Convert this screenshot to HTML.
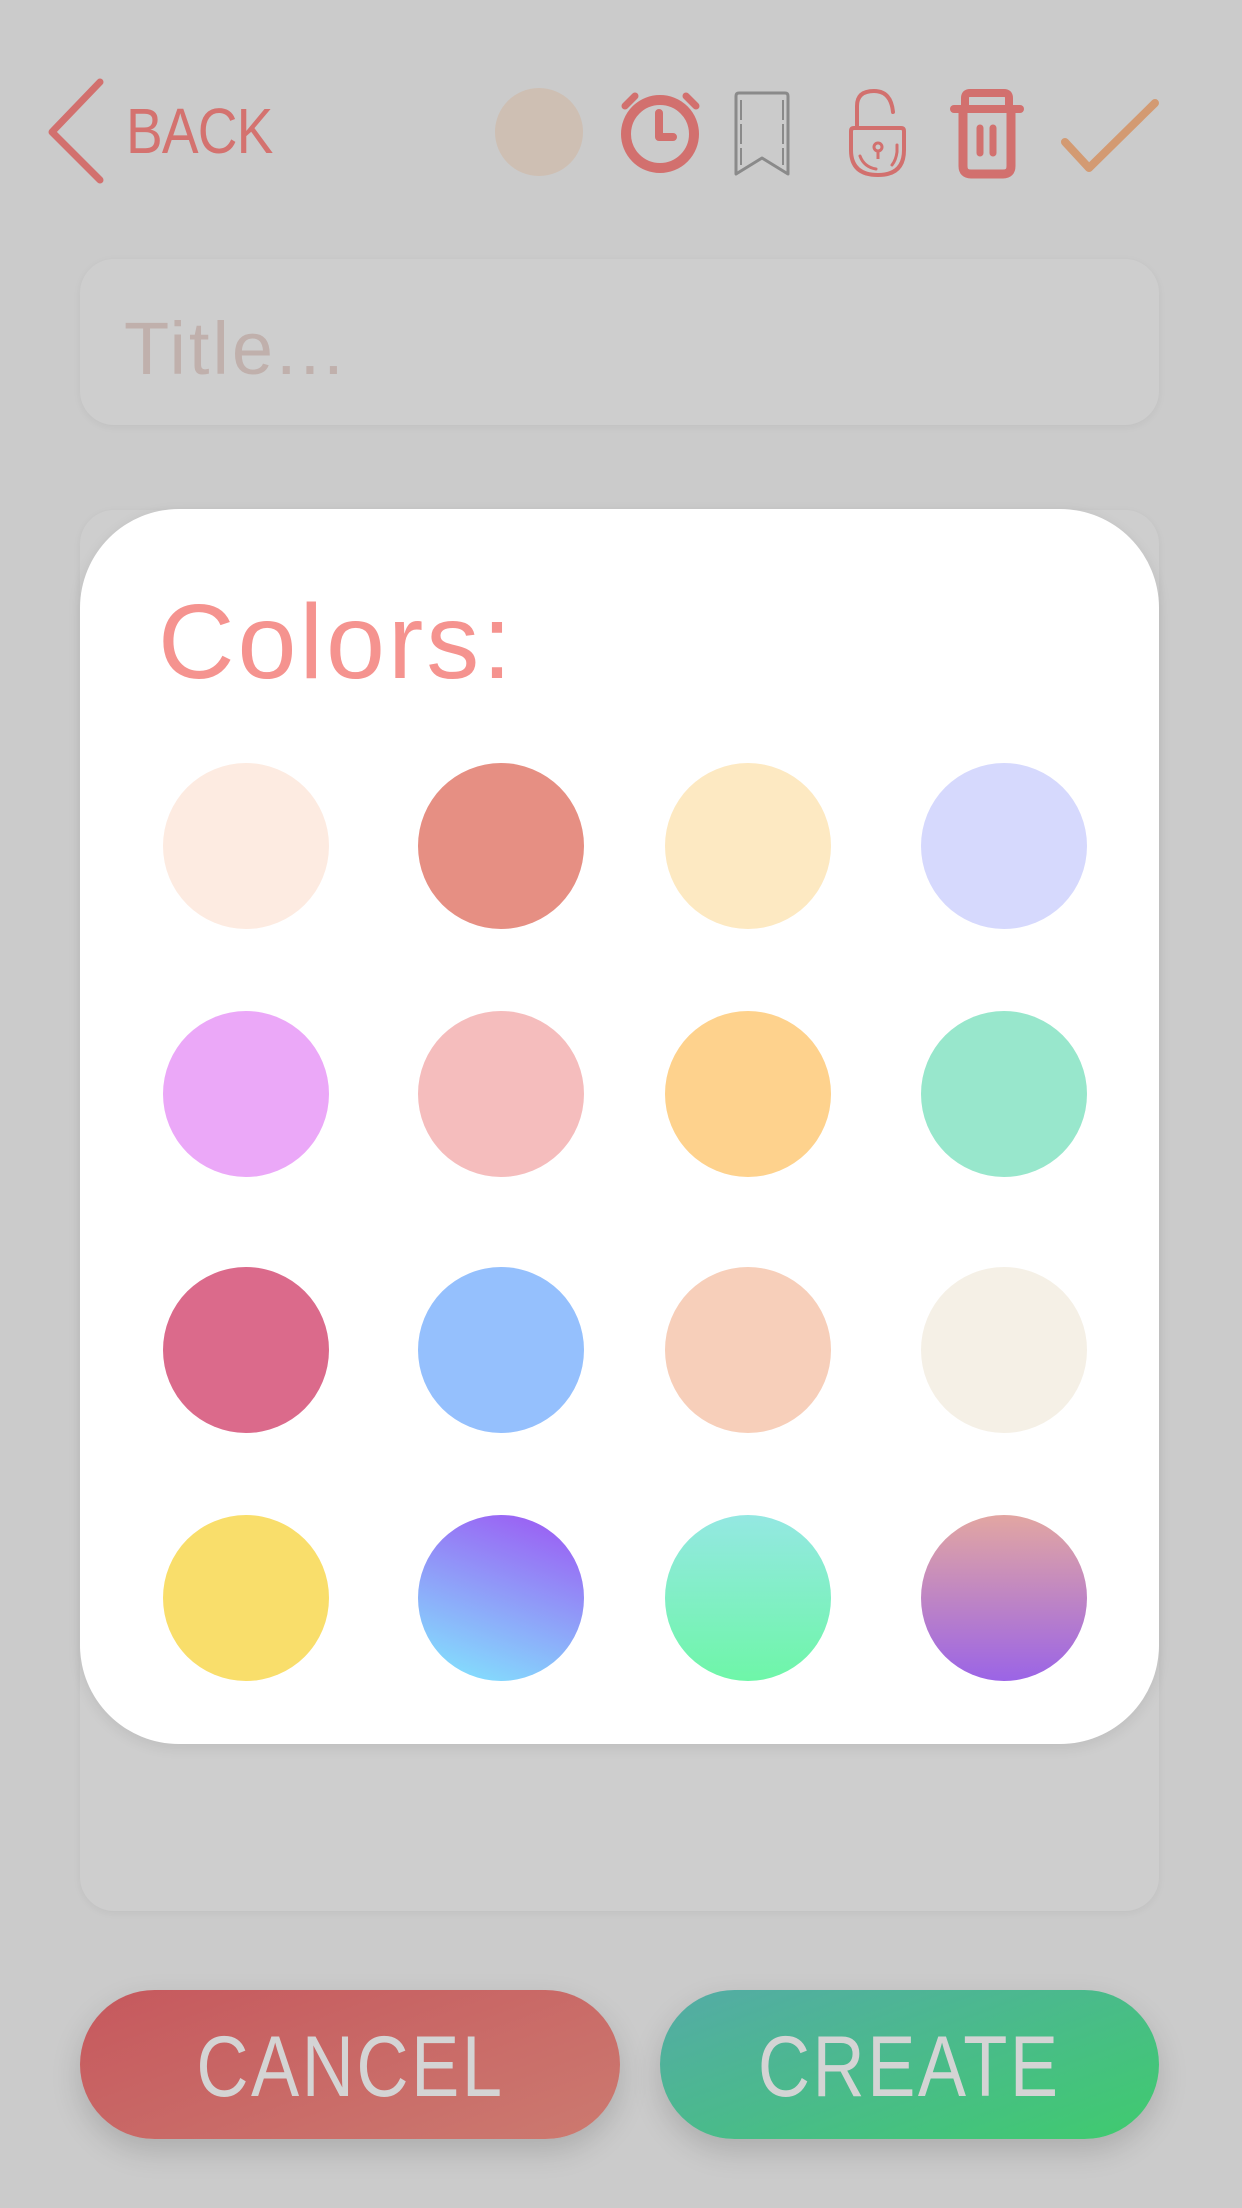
<!DOCTYPE html>
<html><head><meta charset="utf-8"><style>
html,body{margin:0;padding:0}
body{width:1242px;height:2208px;background:#cbcbcb;position:relative;overflow:hidden;font-family:"Liberation Sans",sans-serif}
.abs{position:absolute}
.field{background:#cecece;border-radius:34px;box-shadow:0 2px 8px rgba(0,0,0,.05)}
.dot{position:absolute;width:166px;height:166px;border-radius:50%}
.btn{position:absolute;top:1990px;height:149px;border-radius:75px;box-shadow:0 12px 30px rgba(0,0,0,.15);display:flex;align-items:center;justify-content:center}
.btn span{color:#d4d4d4;font-size:86px;font-weight:300;letter-spacing:3px;display:inline-block;transform:scaleX(.84);margin-top:6px}
</style></head><body>

<svg class="abs" style="left:40px;top:76px" width="70" height="110" viewBox="0 0 70 110">
<polyline points="60,6 12,56 60,104" fill="none" stroke="#d2706e" stroke-width="7" stroke-linecap="round" stroke-linejoin="round"/></svg>
<div class="abs" style="left:126px;top:94px;font-size:64px;color:#d4726f;letter-spacing:-1px;transform:scaleX(.86);transform-origin:left">BACK</div>

<div class="abs" style="left:495px;top:88px;width:88px;height:88px;border-radius:50%;background:#cebfb3"></div>

<svg class="abs" style="left:615px;top:88px" width="90" height="90" viewBox="615 88 90 90">
<circle cx="660" cy="134" r="34" fill="none" stroke="#d2706e" stroke-width="10"/>
<polyline points="659,113 659,137 673,137" fill="none" stroke="#d2706e" stroke-width="8" stroke-linecap="round" stroke-linejoin="round"/>
<line x1="625" y1="106" x2="635" y2="96" stroke="#d2706e" stroke-width="7" stroke-linecap="round"/>
<line x1="686" y1="96" x2="696" y2="106" stroke="#d2706e" stroke-width="7" stroke-linecap="round"/>
</svg>

<svg class="abs" style="left:730px;top:88px" width="64" height="92" viewBox="730 88 64 92">
<path d="M736 174 V96 Q736 93 739 93 H785 Q788 93 788 96 V174 L762 158 Z" fill="none" stroke="#8a8a8a" stroke-width="3" stroke-linejoin="round"/>
<line x1="741" y1="100" x2="741" y2="165" stroke="#8a8a8a" stroke-width="2" stroke-dasharray="20 4"/>
<line x1="783" y1="100" x2="783" y2="165" stroke="#8a8a8a" stroke-width="2" stroke-dasharray="20 4"/>
</svg>

<svg class="abs" style="left:845px;top:86px" width="66" height="94" viewBox="845 86 66 94">
<path d="M857 128 V106 Q857 91 874 91 Q891 91 893 112" fill="none" stroke="#d2706e" stroke-width="4" stroke-linecap="round"/>
<path d="M851 131 Q851 128 854 128 H901 Q904 128 904 131 V150 Q904 175 878 175 Q851 175 851 150 Z" fill="none" stroke="#d2706e" stroke-width="4"/>
<circle cx="878" cy="147" r="4" fill="none" stroke="#d2706e" stroke-width="3"/>
<line x1="878" y1="151" x2="878" y2="159" stroke="#d2706e" stroke-width="3"/>
<path d="M860 156 Q864 167 876 169" fill="none" stroke="#d2706e" stroke-width="3" stroke-linecap="round"/>
<path d="M897 145 V152 Q896 160 892 165" fill="none" stroke="#d2706e" stroke-width="3" stroke-linecap="round"/>
</svg>

<svg class="abs" style="left:948px;top:88px" width="80" height="92" viewBox="948 88 80 92">
<path d="M965 107 V98 Q965 93 970 93 H1004 Q1009 93 1009 98 V107" fill="none" stroke="#d2706e" stroke-width="8"/>
<line x1="954" y1="109" x2="1020" y2="109" stroke="#d2706e" stroke-width="8" stroke-linecap="round"/>
<path d="M963 110 V166 Q963 174 971 174 H1003 Q1011 174 1011 166 V110" fill="none" stroke="#d2706e" stroke-width="9"/>
<line x1="980" y1="128" x2="980" y2="153" stroke="#d2706e" stroke-width="7" stroke-linecap="round"/>
<line x1="993" y1="128" x2="993" y2="153" stroke="#d2706e" stroke-width="7" stroke-linecap="round"/>
</svg>

<svg class="abs" style="left:1055px;top:95px" width="110" height="80" viewBox="1055 95 110 80">
<polyline points="1065,142 1089,168 1155,103" fill="none" stroke="#d39a72" stroke-width="8" stroke-linecap="round" stroke-linejoin="round"/></svg>

<div class="abs field" style="left:80px;top:259px;width:1079px;height:166px"></div>
<div class="abs" style="left:124px;top:306px;font-size:74px;color:#c0b0ac;letter-spacing:3px">Title...</div>

<div class="abs field" style="left:80px;top:510px;width:1079px;height:1401px"></div>

<div class="abs" style="left:80px;top:509px;width:1079px;height:1235px;background:#fff;border-radius:99px;box-shadow:0 4px 14px rgba(0,0,0,.08)"></div>
<div class="abs" style="left:158px;top:582px;font-size:106px;color:#f5938f;letter-spacing:3px">Colors:</div>

<div class="dot" style="left:163px;top:763px;background:#fdebe1"></div>
<div class="dot" style="left:418px;top:763px;background:#e68f83"></div>
<div class="dot" style="left:665px;top:763px;background:#fde9c2"></div>
<div class="dot" style="left:921px;top:763px;background:#d6d9fd"></div>

<div class="dot" style="left:163px;top:1011px;background:#eba8f8"></div>
<div class="dot" style="left:418px;top:1011px;background:#f5bdbd"></div>
<div class="dot" style="left:665px;top:1011px;background:#fed28d"></div>
<div class="dot" style="left:921px;top:1011px;background:#98e7cc"></div>

<div class="dot" style="left:163px;top:1267px;background:#db6a8b"></div>
<div class="dot" style="left:418px;top:1267px;background:#95c0fd"></div>
<div class="dot" style="left:665px;top:1267px;background:#f7cfba"></div>
<div class="dot" style="left:921px;top:1267px;background:#f5f0e6"></div>

<div class="dot" style="left:163px;top:1515px;background:#f9de6b"></div>
<div class="dot" style="left:418px;top:1515px;background:linear-gradient(200deg,#9a63f4 10%,#84dafd 90%)"></div>
<div class="dot" style="left:665px;top:1515px;background:linear-gradient(180deg,#94e8e2,#6ef6a8)"></div>
<div class="dot" style="left:921px;top:1515px;background:linear-gradient(180deg,#e2a6a2,#9b64e6)"></div>

<div class="btn" style="left:80px;width:540px;background:linear-gradient(160deg,#c6585d,#cc7a70)"><span>CANCEL</span></div>
<div class="btn" style="left:660px;width:499px;background:linear-gradient(160deg,#54aba6,#3fcb6e)"><span>CREATE</span></div>

</body></html>
